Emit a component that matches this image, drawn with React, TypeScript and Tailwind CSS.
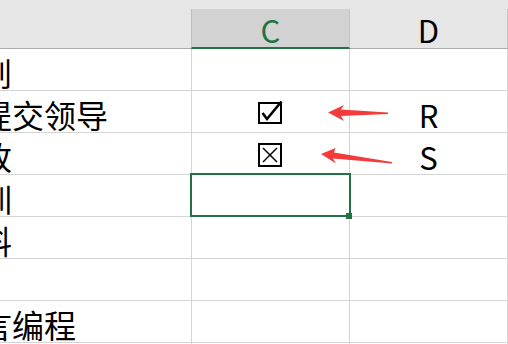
import React from "react";

type Row = { a: string; c?: "check" | "x"; d?: string };

const rows: Row[] = [
  { a: "划" },
  { a: "提交领导", c: "check", d: "R" },
  { a: "改", c: "x", d: "S" },
  { a: "训" },
  { a: "料" },
  { a: "" },
  { a: "言编程" },
  { a: "" },
];

function CheckBox() {
  return (
    <svg width="25" height="24" viewBox="0 0 25 24" className="mb-[7px]">
      <rect x="1" y="2" width="22" height="20" fill="none" stroke="#000" strokeWidth="2" />
      <polyline points="4.5,12 9,18 23.5,0.5" fill="none" stroke="#000" strokeWidth="2.6" strokeLinejoin="miter" />
    </svg>
  );
}

function XBox() {
  return (
    <svg width="25" height="25" viewBox="0 0 25 25" className="mb-[6px]">
      <rect x="1" y="1" width="22" height="22" fill="none" stroke="#000" strokeWidth="2" />
      <line x1="5" y1="5" x2="19" y2="19" stroke="#000" strokeWidth="1.5" />
      <line x1="19" y1="5" x2="5" y2="19" stroke="#000" strokeWidth="1.5" />
    </svg>
  );
}

export default function App() {
  return (
    <div className="relative w-[508px] h-[344px] overflow-hidden bg-white text-black font-['Noto_Sans_CJK_SC','Noto_Sans',sans-serif]">
      <div className="h-[9px] bg-[#e6e6e6]" />
      <div className="flex h-[40px] bg-[#e6e6e6]">
        <div className="w-[191px] border-b border-[#ababab]" />
        <div className="w-[159px] bg-[#d2d2d2] border-l border-r border-l-[#bdbdbd] border-r-[#c6c6c6] border-b-2 border-b-[#217346] flex items-end justify-center text-[31px] leading-[31px] pb-[2px] text-[#217346]">
          C
        </div>
        <div className="w-[158px] border-r border-r-[#c6c6c6] border-b border-b-[#ababab] flex items-end justify-center text-[31px] leading-[31px] pb-[3px]">
          D
        </div>
      </div>
      {rows.map((r, i) => (
        <div key={i} className="flex h-[42px] border-b border-[#d4d4d4] text-[31px] leading-[31px]">
          <div className="w-[191px] overflow-hidden whitespace-nowrap flex items-end pb-[2px] text-[32px] leading-[32px]">
            <span className="ml-[-20px]">{r.a}</span>
          </div>
          <div className="w-[159px] border-l border-r border-[#d4d4d4] flex items-end justify-center">
            {r.c === "check" ? <CheckBox /> : r.c === "x" ? <XBox /> : null}
          </div>
          <div className="w-[158px] border-r border-[#d4d4d4] flex items-end justify-center pb-[2px]">
            {r.d ?? ""}
          </div>
        </div>
      ))}

      <div className="absolute left-[190px] top-[173px] w-[161px] h-[44px] border-2 border-[#217346]" />
      <div className="absolute left-[346px] top-[213px] w-[6px] h-[6px] bg-[#217346]" />

      <svg className="absolute left-0 top-0 pointer-events-none" width="508" height="344" viewBox="0 0 508 344">
        <polygon
          points="328,112.5 344,105 341,109.5 388,112.5 388,114 341,116 344,121"
          fill="#f23b3b"
        />
        <polygon
          points="321,154 335.5,148 334,152.5 392,162 392,163.5 333,158.5 336,163.5"
          fill="#f23b3b"
        />
      </svg>
    </div>
  );
}
